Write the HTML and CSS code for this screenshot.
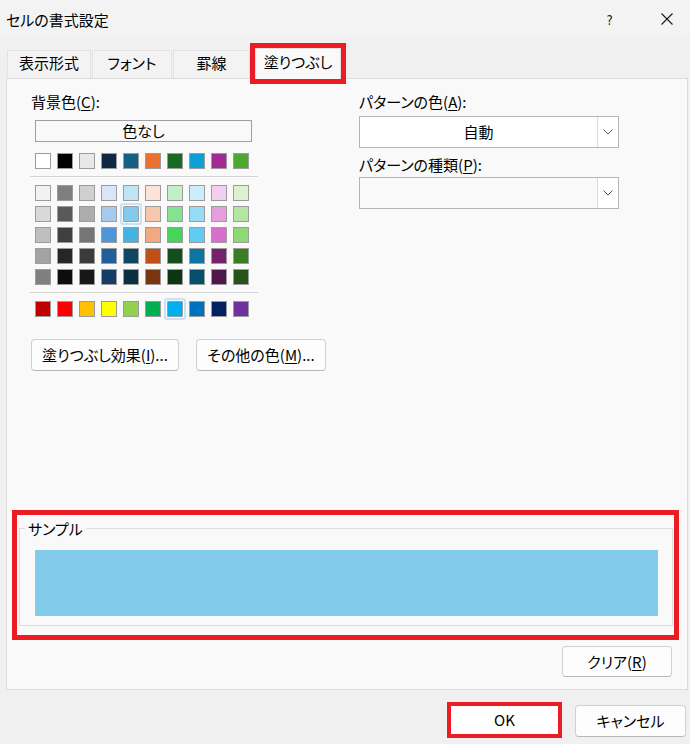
FILE: index.html
```html
<!DOCTYPE html>
<html lang="ja">
<head>
<meta charset="utf-8">
<title>セルの書式設定</title>
<link rel="stylesheet" href="styles.css">
</head>
<body>
<div class="dialog">
  <div class="titlebar">
    <span class="title">セルの書式設定</span>
    <span class="help">?</span>
    <span class="close"><svg width="12" height="12" viewBox="0 0 12 12"><path d="M0.5 0.5 L11.5 11.5 M11.5 0.5 L0.5 11.5" stroke="#1a1a1a" stroke-width="1.1" fill="none"/></svg></span>
  </div>

  <div class="tabs">
    <div class="tab t1">表示形式</div>
    <div class="tab t2">フォント</div>
    <div class="tab t3">罫線</div>
    <div class="tab active">塗りつぶし</div>
  </div>

  <div class="panel">
    <div class="toprow">
      <div class="leftcol">
        <div class="label"><span class="lpad">背景色(<u>C</u>):</span></div>
        <div class="nocolor">色なし</div>
        <div class="swatches row0">
          <span class="sw" style="background:#ffffff"></span>
          <span class="sw" style="background:#000000"></span>
          <span class="sw" style="background:#e8e8e8"></span>
          <span class="sw" style="background:#0e2841"></span>
          <span class="sw" style="background:#156082"></span>
          <span class="sw" style="background:#e97132"></span>
          <span class="sw" style="background:#196b24"></span>
          <span class="sw" style="background:#0f9ed5"></span>
          <span class="sw" style="background:#a02b93"></span>
          <span class="sw" style="background:#4ea72e"></span>
        </div>
        <div class="sep"></div>
        <div class="swatches tints">
          <span class="sw" style="background:#f2f2f2"></span>
          <span class="sw" style="background:#7f7f7f"></span>
          <span class="sw" style="background:#d0d0d0"></span>
          <span class="sw" style="background:#dae6f7"></span>
          <span class="sw" style="background:#c0e4f5"></span>
          <span class="sw" style="background:#fbe3d6"></span>
          <span class="sw" style="background:#c1f0c8"></span>
          <span class="sw" style="background:#caeefb"></span>
          <span class="sw" style="background:#f2cfee"></span>
          <span class="sw" style="background:#daf2d0"></span>

          <span class="sw" style="background:#d9d9d9"></span>
          <span class="sw" style="background:#595959"></span>
          <span class="sw" style="background:#adadad"></span>
          <span class="sw" style="background:#a6c9ec"></span>
          <span class="sw sel" style="background:#83cbeb"></span>
          <span class="sw" style="background:#f7c7ac"></span>
          <span class="sw" style="background:#84e291"></span>
          <span class="sw" style="background:#95dcf7"></span>
          <span class="sw" style="background:#e59edd"></span>
          <span class="sw" style="background:#b4e5a2"></span>

          <span class="sw" style="background:#bfbfbf"></span>
          <span class="sw" style="background:#404040"></span>
          <span class="sw" style="background:#757575"></span>
          <span class="sw" style="background:#4e95d9"></span>
          <span class="sw" style="background:#44b3e1"></span>
          <span class="sw" style="background:#f1a983"></span>
          <span class="sw" style="background:#47d45a"></span>
          <span class="sw" style="background:#61cbf3"></span>
          <span class="sw" style="background:#d86dcd"></span>
          <span class="sw" style="background:#8ed973"></span>

          <span class="sw" style="background:#a3a3a3"></span>
          <span class="sw" style="background:#262626"></span>
          <span class="sw" style="background:#3a3a3a"></span>
          <span class="sw" style="background:#215f9a"></span>
          <span class="sw" style="background:#0f4761"></span>
          <span class="sw" style="background:#c04f15"></span>
          <span class="sw" style="background:#124f1a"></span>
          <span class="sw" style="background:#0b76a0"></span>
          <span class="sw" style="background:#77206d"></span>
          <span class="sw" style="background:#3b7d23"></span>

          <span class="sw" style="background:#7f7f7f"></span>
          <span class="sw" style="background:#0d0d0d"></span>
          <span class="sw" style="background:#171717"></span>
          <span class="sw" style="background:#153d64"></span>
          <span class="sw" style="background:#0a2f41"></span>
          <span class="sw" style="background:#7a3410"></span>
          <span class="sw" style="background:#0c3512"></span>
          <span class="sw" style="background:#064f6a"></span>
          <span class="sw" style="background:#501549"></span>
          <span class="sw" style="background:#275317"></span>
        </div>
        <div class="sep sep2"></div>
        <div class="swatches std">
          <span class="sw" style="background:#c00000"></span>
          <span class="sw" style="background:#ff0000"></span>
          <span class="sw" style="background:#ffc000"></span>
          <span class="sw" style="background:#ffff00"></span>
          <span class="sw" style="background:#92d050"></span>
          <span class="sw" style="background:#00b050"></span>
          <span class="sw sel" style="background:#00b0f0"></span>
          <span class="sw" style="background:#0070c0"></span>
          <span class="sw" style="background:#002060"></span>
          <span class="sw" style="background:#7030a0"></span>
        </div>
        <div class="btnrow">
          <div class="btn effect">塗りつぶし効果(<u>I</u>)...</div>
          <div class="btn more">その他の色(<u>M</u>)...</div>
        </div>
      </div>

      <div class="rightcol">
        <div class="label">パターンの色(<u>A</u>):</div>
        <div class="combo">
          <div class="combo-text">自動</div>
          <div class="combo-arrow"><svg width="10" height="6" viewBox="0 0 10 6"><polyline points="0.5,0.5 5,5 9.5,0.5" fill="none" stroke="#5a5a5a" stroke-width="1"/></svg></div>
        </div>
        <div class="label label2">パターンの種類(<u>P</u>):</div>
        <div class="combo combo2">
          <div class="combo-text"></div>
          <div class="combo-arrow"><svg width="10" height="6" viewBox="0 0 10 6"><polyline points="0.5,0.5 5,5 9.5,0.5" fill="none" stroke="#5a5a5a" stroke-width="1"/></svg></div>
        </div>
      </div>
    </div>

    <div class="sample-hl">
      <div class="groupbox">
        <div class="gb-label">サンプル</div>
        <div class="sample-fill"></div>
      </div>
    </div>

    <div class="clearrow">
      <div class="btn clear">クリア(<u>R</u>)</div>
    </div>
  </div>

  <div class="footer">
    <div class="btn ok">OK</div>
    <div class="btn cancel">キャンセル</div>
  </div>
</div>
</body>
</html>
```

FILE: styles.css
```css
* { box-sizing: border-box; }

html, body {
  margin: 0;
  padding: 0;
}

body {
  width: 690px;
  height: 744px;
  overflow: hidden;
  background: #f0f0f0;
  font-family: "Noto Sans CJK JP", "Noto Sans", sans-serif;
  font-feature-settings: "palt";
  font-size: 15px;
  line-height: 20px;
  color: #000;
}

u { text-decoration: underline; text-underline-offset: 2px; text-decoration-thickness: 1px; }

.dialog {
  width: 690px;
  height: 744px;
}

/* title bar */
.titlebar {
  height: 36px;
  background: #f3f3f3;
  display: flex;
  align-items: center;
}
.title {
  margin-left: 6px;
  line-height: 20px;
  padding-top: 4px;
}
.help {
  margin-left: auto;
  width: 8px;
  line-height: 20px;
  padding-top: 4px;
  font-family: "DejaVu Sans", sans-serif;
  font-weight: normal;
  font-size: 14px;
  color: #222;
  transform: scaleX(0.85);
}
.close {
  margin-left: 47px;
  margin-right: 17px;
  width: 12px;
  height: 12px;
  display: flex;
  margin-top: 2px;
}

/* tabs */
.tabs {
  display: flex;
  align-items: flex-end;
  height: 42px;
  padding-left: 7px;
}
.tab {
  height: 28px;
  line-height: 24px;
  text-align: center;
  background: #f3f3f3;
  border: 1px solid #e2e2e2;
  border-bottom: none;
  margin-right: 1px;
  flex-shrink: 0;
}
.t1 { width: 84px; }
.t2 { width: 80px; }
.t3 { width: 77px; }
.tab.active {
  margin-left: 4px;
  width: 86px;
  height: 31px;
  line-height: 26px;
  background: #f9f9f9;
  outline: 5px solid #ec1c24;
  position: relative;
  z-index: 2;
  margin-bottom: -1px;
}

/* panel */
.panel {
  margin-left: 6px;
  width: 682px;
  height: 612px;
  background: #f9f9f9;
  border: 1px solid #dcdcdc;
  display: flex;
  flex-direction: column;
}

.toprow {
  display: flex;
  padding-top: 13px;
}
.leftcol {
  margin-left: 23px;
  width: 228px;
  flex-shrink: 0;
}
.label {
  height: 20px;
  line-height: 20px;
  white-space: nowrap;
}
.lpad { padding-left: 1px; }

.nocolor {
  margin: 8px 0 0 5px;
  width: 217px;
  height: 22px;
  border: 1px solid #a0a0a0;
  text-align: center;
  line-height: 20px;
}

.swatches {
  display: grid;
  grid-template-columns: repeat(10, 16px);
  column-gap: 6px;
  row-gap: 5px;
  margin-left: 5px;
}
.row0 { margin-top: 11px; }
.tints { margin-top: 8px; }
.std { margin-top: 8px; }
.sw {
  display: block;
  width: 16px;
  height: 16px;
  border: 1px solid #9c9c9c;
}
.sw.sel {
  box-shadow: 0 0 0 1px #ffffff, 0 0 0 3px #c6e3fa;
  border-radius: 1px;
}
.sep {
  margin-top: 7px;
  height: 1px;
  background: #d4d4d4;
  width: 228px;
}

.btnrow {
  display: flex;
  gap: 17px;
  margin-top: 22px;
  margin-left: 1px;
}
.btn {
  height: 32px;
  line-height: 30px;
  text-align: center;
  background: #fdfdfd;
  border: 1px solid #d0d0d0;
  border-bottom-color: #b8b8b8;
  border-radius: 4px;
  white-space: nowrap;
  flex-shrink: 0;
}
.effect { width: 148px; }
.more { width: 130px; }

.rightcol {
  margin-left: 101px;
  width: 260px;
  flex-shrink: 0;
}
.combo {
  margin-top: 4px;
  height: 32px;
  background: #ffffff;
  border: 1px solid #b4b4b4;
  display: flex;
}
.combo2 {
  margin-top: 2px;
  background: #fafafa;
}
.label2 { margin-top: 7px; }
.combo-text {
  flex: 1;
  text-align: center;
  line-height: 30px;
}
.combo-arrow {
  width: 21px;
  border-left: 1px solid #d9d9d9;
  display: flex;
  align-items: center;
  justify-content: center;
  background: #ffffff;
}

/* sample */
.sample-hl {
  margin-top: 144px;
  margin-left: 10px;
  width: 657px;
  outline: 5px solid #ec1c24;
  padding: 13px 1px 9px 2px;
}
.groupbox {
  border: 1px solid #dcdcdc;
  padding: 0 14px 9px 15px;
}
.gb-label {
  display: block;
  width: max-content;
  margin-top: -10px;
  margin-left: -10px;
  padding: 0 3px;
  height: 20px;
  line-height: 20px;
  background: #f9f9f9;
}
.sample-fill {
  margin-top: 11px;
  height: 66px;
  background: #83cbeb;
}

.clearrow {
  display: flex;
  justify-content: flex-end;
  margin-top: 11px;
  padding-right: 15px;
}
.clear {
  width: 110px;
  height: 31px;
  line-height: 29px;
}

/* footer */
.footer {
  display: flex;
  justify-content: flex-end;
  align-items: flex-start;
  padding: 15px 4px 0 0;
}
.ok {
  margin-top: 1px;
  width: 107px;
  height: 28px;
  line-height: 26px;
  background: #ffffff;
  border: 1px solid #ffffff;
  border-radius: 0;
  outline: 4px solid #ec1c24;
  margin-right: 17px;
}
.cancel {
  width: 111px;
}
```
